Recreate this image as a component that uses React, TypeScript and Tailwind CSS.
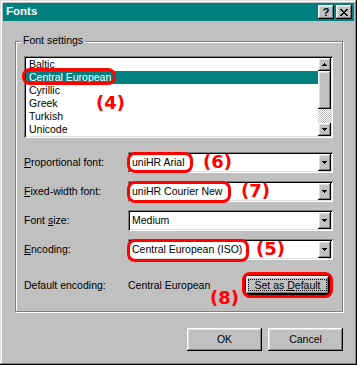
import type { ReactNode } from 'react';

// classic 3D bevels
const raised =
  'bg-[#c0c0c0] shadow-[inset_-1px_-1px_0_#000,inset_1px_1px_0_#fff,inset_-2px_-2px_0_#808080,inset_2px_2px_0_#dfdfdf]';
const sunken =
  'shadow-[inset_1px_1px_0_#808080,inset_-1px_-1px_0_#fff,inset_2px_2px_0_#000,inset_-2px_-2px_0_#dfdfdf]';

const encodings = ['Baltic', 'Central European', 'Cyrillic', 'Greek', 'Turkish', 'Unicode'];

function Arrow({ up = false }: { up?: boolean }) {
  return (
    <svg width="5" height="3" viewBox="0 0 5 3" shapeRendering="crispEdges" className={up ? 'rotate-180' : ''}>
      <path d="M0 0h5v1h-1v1h-1v1h-1v-1h-1v-1h-1z" fill="#000" />
    </svg>
  );
}

function Combo({ value }: { value: string }) {
  return (
    <div className={`flex h-[21px] flex-1 items-center bg-white p-[2px] ${sunken}`}>
      <span className="flex-1 pl-[2px] leading-[13px]">{value}</span>
      <div className={`flex h-[17px] w-[13px] items-center justify-center ${raised}`}>
        <Arrow />
      </div>
    </div>
  );
}

function Row({ label, children }: { label: ReactNode; children: ReactNode }) {
  return (
    <div className="mt-[8px] flex items-center first:mt-0">
      <div className="w-[104px] leading-[13px]">{label}</div>
      {children}
    </div>
  );
}

function Mark({ className }: { className: string }) {
  return <div className={`absolute rounded-[8px] border-[3px] border-[#ff0000] ${className}`} />;
}

function Num({ n, className }: { n: string; className: string }) {
  return (
    <div className={`absolute font-['DejaVu_Sans',sans-serif] text-[18px] leading-[18px] font-bold text-[#ff0000] ${className}`}>
      ({n})
    </div>
  );
}

export default function App() {
  return (
    <div
      className={`relative flex h-[365px] w-[357px] flex-col bg-[#c0c0c0] p-[3px] font-['Liberation_Sans',Arial,sans-serif] text-[10.5px] text-black shadow-[inset_-1px_-1px_0_#000,inset_1px_1px_0_#dfdfdf,inset_-2px_-2px_0_#808080,inset_2px_2px_0_#fff]`}
    >
      {/* Title bar */}
      <div className="flex h-[18px] items-center bg-[#008080] pr-[2px] pl-[3px]">
        <span className="flex-1 text-[11.5px] font-bold text-white">Fonts</span>
        <div className={`flex h-[14px] w-[16px] items-center justify-center text-[11px] leading-none font-bold ${raised}`}>
          ?
        </div>
        <div className={`ml-[2px] flex h-[14px] w-[16px] items-center justify-center ${raised}`}>
          <svg width="8" height="7" viewBox="0 0 8 7" shapeRendering="crispEdges">
            <path
              d="M0 0h2v1h1v1h2v-1h1v-1h2v1h-1v1h-1v1h-1v1h1v1h1v1h1v1h-2v-1h-1v-1h-2v1h-1v1h-2v-1h1v-1h1v-1h1v-1h-1v-1h-1v-1h-1z"
              fill="#000"
            />
          </svg>
        </div>
      </div>

      <div className="flex flex-1 flex-col pr-[11px] pl-[12px]">
        {/* Font settings group */}
        <div className="relative mt-[20px] border border-[#808080] pt-[14px] pr-[9px] pb-[16px] pl-[8px] shadow-[1px_1px_0_#fff,inset_1px_1px_0_#fff]">
          <span className="absolute -top-[8px] left-[5px] bg-[#c0c0c0] px-[2px] leading-[13px]">Font settings</span>

          {/* Listbox */}
          <div className={`flex h-[82px] bg-white p-[2px] ${sunken}`}>
            <div className="flex-1 overflow-hidden">
              {encodings.map((e) => (
                <div
                  key={e}
                  className={`h-[13px] pl-[3px] leading-[13px] ${e === 'Central European' ? 'bg-[#008080] text-white' : ''}`}
                >
                  {e}
                </div>
              ))}
            </div>
            <div className="flex w-[13px] flex-col">
              <div className={`flex h-[13px] items-center justify-center ${raised}`}>
                <Arrow up />
              </div>
              <div className={`h-[38px] ${raised}`} />
              <div className="flex-1 bg-[image:repeating-conic-gradient(#c0c0c0_0_25%,#fff_0_50%)] bg-[length:2px_2px]" />
              <div className={`flex h-[13px] items-center justify-center ${raised}`}>
                <Arrow />
              </div>
            </div>
          </div>

          <div className="mt-[14px] flex flex-col">
            <Row label={<><u>P</u>roportional font:</>}>
              <Combo value="uniHR Arial" />
            </Row>
            <Row label={<><u>F</u>ixed-width font:</>}>
              <Combo value="uniHR Courier New" />
            </Row>
            <Row label={<>Font <u>s</u>ize:</>}>
              <Combo value="Medium" />
            </Row>
            <Row label={<><u>E</u>ncoding:</>}>
              <Combo value="Central European (ISO)" />
            </Row>
          </div>

          <div className="mt-[15px] flex items-center">
            <div className="w-[104px] leading-[13px]">Default encoding:</div>
            <div className="flex-1 leading-[13px]">Central European</div>
            <div className={`mr-[3px] flex h-[20px] w-[85px] border border-black ${raised}`}>
              <div className="mx-[2px] my-[3px] flex flex-1 items-center justify-center border border-dotted border-black leading-[12px]">
                <span>
                  Set as <u>D</u>efault
                </span>
              </div>
            </div>
          </div>
        </div>

        {/* Dialog buttons */}
        <div className="mt-[16px] flex justify-end gap-[6px]">
          <div className={`flex h-[23px] w-[75px] items-center justify-center ${raised}`}>OK</div>
          <div className={`flex h-[23px] w-[75px] items-center justify-center ${raised}`}>Cancel</div>
        </div>
      </div>

      {/* Red annotations */}
      <Mark className="top-[68px] left-[22px] h-[17px] w-[94px]" />
      <Num n="4" className="top-[94px] left-[96px]" />
      <Mark className="top-[152px] left-[127px] h-[21px] w-[66px]" />
      <Num n="6" className="top-[153px] left-[203px]" />
      <Mark className="top-[181px] left-[127px] h-[22px] w-[104px]" />
      <Num n="7" className="top-[182px] left-[241px]" />
      <Mark className="top-[239px] left-[127px] h-[23px] w-[122px]" />
      <Num n="5" className="top-[240px] left-[256px]" />
      <Mark className="top-[272px] left-[242px] h-[26px] w-[91px]" />
      <Num n="8" className="top-[289px] left-[210px]" />
    </div>
  );
}
